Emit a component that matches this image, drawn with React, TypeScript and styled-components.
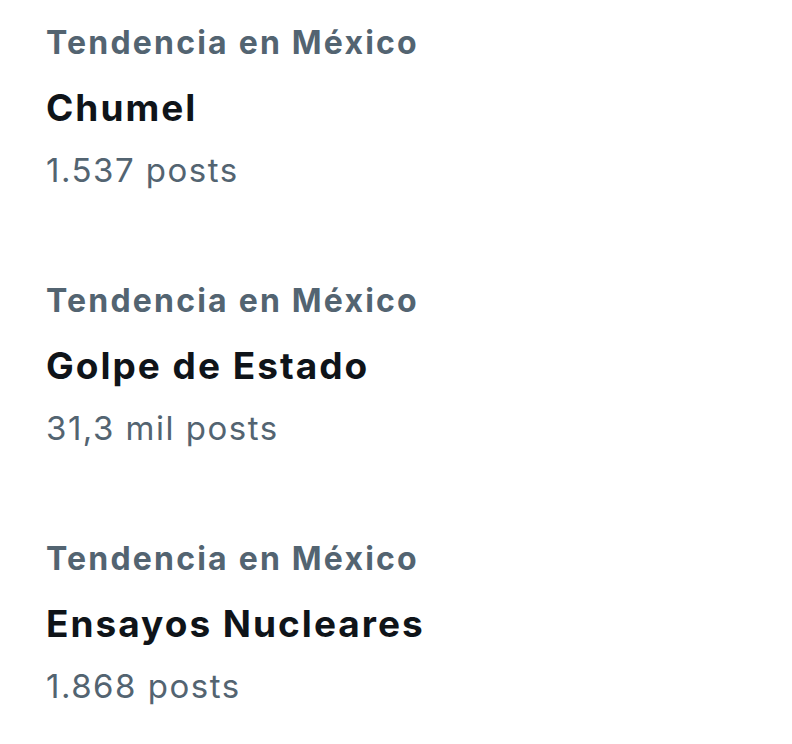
import React from 'react';
import styled, { createGlobalStyle } from 'styled-components';

const GlobalStyle = createGlobalStyle`
  body {
    margin: 0;
    background: #ffffff;
    font-family: Inter, "Noto Sans", sans-serif;
  }
`;

const TrendList = styled.main`
  display: flex;
  flex-direction: column;
  gap: 77px;
  padding: 18px 46px 0;
`;

const TrendItem = styled.article`
  display: flex;
  flex-direction: column;
`;

const Context = styled.span`
  font-size: 32px;
  font-weight: 700;
  line-height: 50px;
  letter-spacing: 2.2px;
  color: #536471;
`;

const Title = styled.span`
  font-size: 37px;
  font-weight: 700;
  line-height: 66px;
  padding-top: 7px;
  letter-spacing: 2px;
  color: #0f1419;
`;

const Count = styled.span`
  font-size: 33px;
  font-weight: 400;
  line-height: 58px;
  letter-spacing: 1.5px;
  color: #536471;
`;

const TRENDS = [
  { title: 'Chumel', count: '1.537 posts' },
  { title: 'Golpe de Estado', count: '31,3 mil posts' },
  { title: 'Ensayos Nucleares', count: '1.868 posts' },
];

function App() {
  return (
    <>
      <GlobalStyle />
      <TrendList>
        {TRENDS.map((trend) => (
          <TrendItem key={trend.title}>
            <Context>Tendencia en México</Context>
            <Title>{trend.title}</Title>
            <Count>{trend.count}</Count>
          </TrendItem>
        ))}
      </TrendList>
    </>
  );
}

export default App;
